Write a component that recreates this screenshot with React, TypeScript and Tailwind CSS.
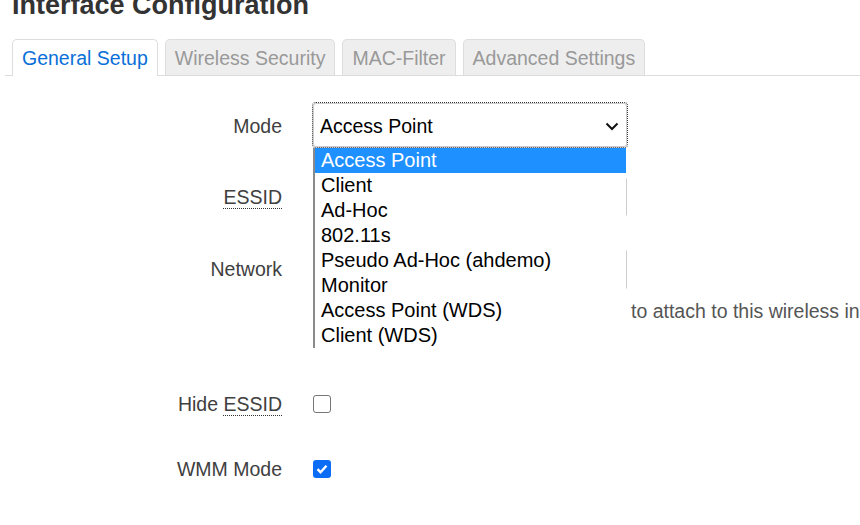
import React from "react";

const modes = [
  "Access Point",
  "Client",
  "Ad-Hoc",
  "802.11s",
  "Pseudo Ad-Hoc (ahdemo)",
  "Monitor",
  "Access Point (WDS)",
  "Client (WDS)",
];

const tabs = ["General Setup", "Wireless Security", "MAC-Filter", "Advanced Settings"];

function Abbr({ children }: { children: React.ReactNode }) {
  return <span className="border-b border-dotted border-[#333] leading-[20px]">{children}</span>;
}

export default function App() {
  return (
    <div
      className="w-[860px] h-[525px] overflow-hidden bg-white text-[19.5px] text-[#404040]"
      style={{ fontFamily: '"Liberation Sans", Arial, sans-serif' }}
    >
      <h2 className="mt-[-11px] ml-[12px] text-[27px] leading-[32px] font-bold text-[#333]">
        Interface Configuration
      </h2>

      {/* tabs */}
      <ul className="mt-[18px] ml-[5px] pl-[7px] flex gap-[7px] border-b border-[#ddd]">
        {tabs.map((t, i) =>
          i === 0 ? (
            <li
              key={t}
              className="h-[37px] -mb-px px-[9px] pt-[2px] flex items-center bg-white border border-b-0 border-[#ddd] rounded-t-[5px] text-[#0a6fd8]"
            >
              {t}
            </li>
          ) : (
            <li
              key={t}
              className="h-[36px] px-[9px] pt-[2px] flex items-center bg-[#eee] border border-b-0 border-[#ddd] rounded-t-[5px] text-[#999]"
            >
              {t}
            </li>
          )
        )}
      </ul>

      <div className="pt-[27px]">
        {/* Mode */}
        <div className="flex items-center h-[44px]">
          <div className="w-[282px] text-right pt-[3px]">Mode</div>
          <div className="ml-[31px] relative z-10">
            <div className="w-[314px] h-[44px] border border-[#ccc] rounded-[3px] outline outline-1 outline-dotted outline-[#333] flex items-center pl-[6px] pr-[6px] text-black">
              <span className="flex-1 pt-[3px]">Access Point</span>
              <svg width="14" height="10" viewBox="0 0 14 10" className="mr-[1px] mt-[2px]">
                <path d="M1.5 2.5L7 8L12.5 2.5" stroke="#111" strokeWidth="2" fill="none" />
              </svg>
            </div>
            <ul className="absolute left-0 top-[45px] w-[313px] bg-white border-l-2 border-[#8a8a8a] text-black text-[20px]">
              {modes.map((m, i) => (
                <li
                  key={m}
                  className={
                    i === 0
                      ? "h-[25px] leading-[25px] pl-[6px] bg-[#1e90ff] text-white"
                      : "h-[25px] leading-[25px] pl-[6px]"
                  }
                >
                  {m}
                </li>
              ))}
            </ul>
          </div>
        </div>

        {/* ESSID */}
        <div className="flex items-center h-[40px] mt-[30px]">
          <div className="w-[282px] text-right pt-[1px]">
            <Abbr>ESSID</Abbr>
          </div>
          <div className="ml-[31px] w-[314px] h-[40px] border border-[#ccc] rounded-[3px]" />
        </div>

        {/* Network */}
        <div className="flex items-center h-[41px] mt-[32px]">
          <div className="w-[282px] text-right">Network</div>
          <div className="ml-[31px] w-[314px] h-[41px] border border-[#ccc] rounded-[3px]" />
        </div>
        <div className="mt-[10px] ml-[631px] h-[22px] leading-[22px] whitespace-nowrap overflow-hidden text-[#555]">
          to attach to this wireless interface
        </div>

        {/* Hide ESSID */}
        <div className="flex items-center h-[30px] mt-[67px]">
          <div className="w-[282px] text-right pt-[1px]">
            Hide <Abbr>ESSID</Abbr>
          </div>
          <div className="ml-[31px] w-[18px] h-[18px] border border-[#777] rounded-[3px] bg-white" />
        </div>

        {/* WMM Mode */}
        <div className="flex items-center h-[30px] mt-[35px]">
          <div className="w-[282px] text-right pt-[2px]">WMM Mode</div>
          <div className="ml-[31px] w-[18px] h-[18px] rounded-[3px] bg-[#0b6cf5] flex items-center justify-center">
            <svg width="12" height="10" viewBox="0 0 12 10">
              <path d="M1.5 5.2L4.5 8.2L10.5 1.8" stroke="#fff" strokeWidth="2.4" fill="none" />
            </svg>
          </div>
        </div>
      </div>
    </div>
  );
}
